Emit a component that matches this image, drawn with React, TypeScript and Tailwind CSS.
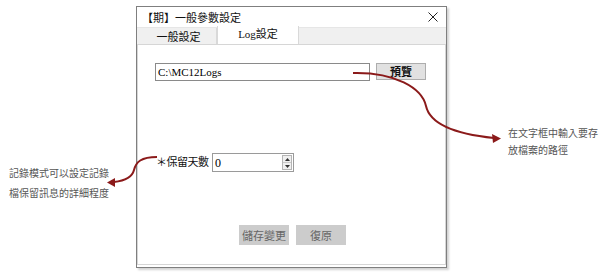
import React from "react";

const CJK = '"Noto Sans CJK TC", "Noto Sans CJK JP", sans-serif';
const SERIF = '"Liberation Serif", "Noto Sans CJK TC", serif';

function Arrows() {
  return (
    <svg
      className="pointer-events-none absolute left-0 top-0"
      width={600}
      height={272}
      viewBox="0 0 600 272"
    >
      <path
        d="M353 73 C395 72 422 88 426 106 C430 124 455 134 494 138"
        fill="none"
        stroke="#8b1a1a"
        strokeWidth={2}
      />
      <polygon points="501,138.5 492,134 493,143" fill="#8b1a1a" />
      <path
        d="M157 157 C141 157 136 162 134 170 C132 178 123 181 114 182"
        fill="none"
        stroke="#8b1a1a"
        strokeWidth={2}
      />
      <polygon points="107,182.5 115,178 115,187" fill="#8b1a1a" />
    </svg>
  );
}

function SpinBox() {
  return (
    <div className="flex h-[19px] w-[82px] items-center border border-[#9a9a9a] bg-white">
      <span className="flex-1 pl-[2px] text-[12px] leading-none text-black" style={{ fontFamily: SERIF }}>
        0
      </span>
      <div className="mr-[1px] flex h-[15px] w-[10px] flex-col border border-[#b5b5b5] bg-[#f0f0f0]">
        <div className="flex flex-1 items-center justify-center border-b border-[#c8c8c8]">
          <svg width="5" height="3" viewBox="0 0 5 3">
            <polygon points="2.5,0 5,3 0,3" fill="#333" />
          </svg>
        </div>
        <div className="flex flex-1 items-center justify-center">
          <svg width="5" height="3" viewBox="0 0 5 3">
            <polygon points="0,0 5,0 2.5,3" fill="#333" />
          </svg>
        </div>
      </div>
    </div>
  );
}

export default function App() {
  return (
    <div className="relative h-[272px] w-[600px] overflow-hidden bg-white">
      <div className="pl-[136px] pt-[6px]">
        <div className="flex h-[262px] w-[311px] flex-col border border-[#7f7f7f] bg-white shadow-[2px_2px_2px_rgba(0,0,0,0.18)]">
          {/* title bar */}
          <div className="flex h-[20px] items-center justify-between pl-[5px] pr-[8px]">
            <span className="text-[11px] text-[#111]" style={{ fontFamily: CJK }}>
              【期】一般參數設定
            </span>
            <svg width="10" height="10" viewBox="0 0 10 10">
              <path d="M0.5 0.5 L9.5 9.5 M9.5 0.5 L0.5 9.5" stroke="#222" strokeWidth={1} />
            </svg>
          </div>
          {/* tabs */}
          <div className="flex h-[17px] items-end border-t border-[#e6e6e6] bg-[#f0f0f0]">
            <div
              className="flex h-[16px] w-[80px] items-center justify-center border-r border-[#d9d9d9] pl-[4px] text-[11px] text-[#111]"
              style={{ fontFamily: CJK }}
            >
              一般設定
            </div>
            <div
              className="-mt-[2px] flex h-[18px] w-[82px] items-start justify-center self-start border-x border-[#d9d9d9] bg-white text-[11px] text-[#111]"
              style={{ fontFamily: SERIF }}
            >
              Log設定
            </div>
          </div>
          {/* panel */}
          <div className="mb-[2px] flex flex-1 flex-col border border-[#d6d6d6] bg-white">
            <div className="ml-[17px] mt-[18px] flex items-start gap-[6px]">
              <div
                className="flex h-[18px] w-[215px] items-center border border-[#8a8a8a] pl-[2px] text-[11px] text-black"
                style={{ fontFamily: SERIF }}
              >
                C:\MC12Logs
              </div>
              <div
                className="flex h-[17px] w-[50px] items-center justify-center border border-[#adadad] bg-[#e1e1e1] text-[11px] font-bold text-[#111]"
                style={{ fontFamily: CJK }}
              >
                預覽
              </div>
            </div>
            <div className="ml-[18px] mt-[72px] flex items-start gap-[6px]">
              <span
                className="w-[50px] whitespace-nowrap pt-[2px] text-[11px] leading-[13px] tracking-[-0.5px] text-[#111]"
                style={{ fontFamily: CJK }}
              >
                ＊保留天數
              </span>
              <SpinBox />
            </div>
            <div className="ml-[101px] mt-[53px] flex gap-[7px]">
              <div
                className="flex h-[20px] w-[50px] items-center justify-center bg-[#cccccc] text-[11px] text-[#666]"
                style={{ fontFamily: CJK }}
              >
                儲存變更
              </div>
              <div
                className="flex h-[20px] w-[50px] items-center justify-center bg-[#cccccc] text-[11px] text-[#666]"
                style={{ fontFamily: CJK }}
              >
                復原
              </div>
            </div>
          </div>
        </div>
      </div>

      {/* annotations */}
      <div
        className="absolute left-[508px] top-[124px] text-[10px] leading-[17px] text-[#555]"
        style={{ fontFamily: CJK }}
      >
        <div>在文字框中輸入要存</div>
        <div>放檔案的路徑</div>
      </div>
      <div
        className="absolute left-[9px] top-[163px] text-[10px] leading-[20px] text-[#555]"
        style={{ fontFamily: CJK }}
      >
        <div>記錄模式可以設定記錄</div>
        <div>檔保留訊息的詳細程度</div>
      </div>
      <Arrows />
    </div>
  );
}
